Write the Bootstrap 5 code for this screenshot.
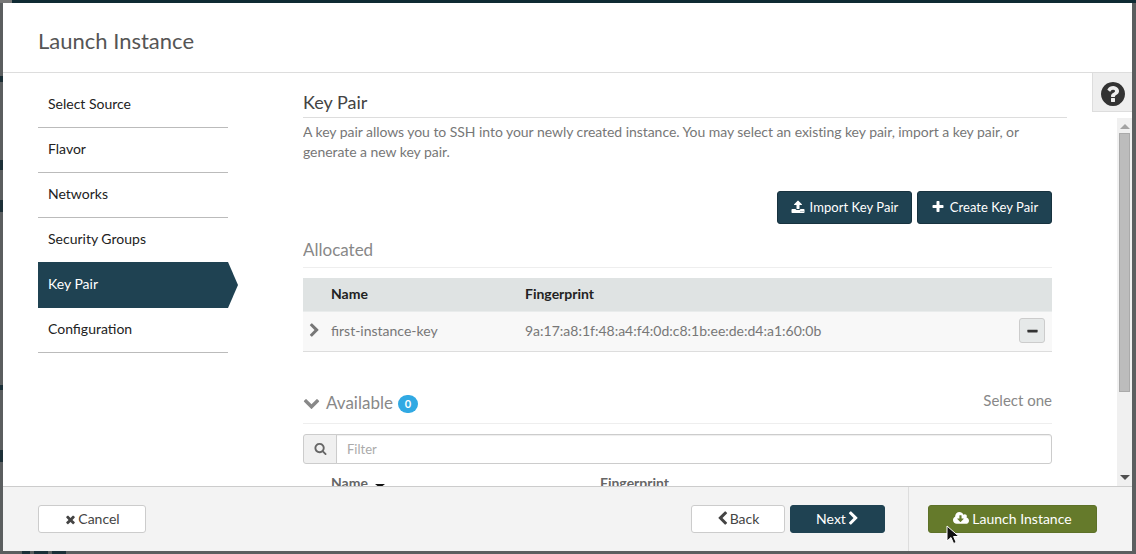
<!DOCTYPE html>
<html lang="en">
<head>
    <meta charset="UTF-8">
    <title>Launch Instance</title>
    <link href="https://cdn.jsdelivr.net/npm/bootstrap@5.3.0/dist/css/bootstrap.min.css" rel="stylesheet">
    <style>
        html, body { height: 554px; overflow: hidden; }
        body {
            font-family: Lato, "Liberation Sans", sans-serif;
            font-size: 14px;
            color: #333;
            background-color: #5b5e5f;
            background-image: linear-gradient(90deg, #777 0 12px, #0f2a33 12px),
                linear-gradient(180deg, transparent 76px, #1c2f36 76px 82px, transparent 82px 160px, #1c3038 160px 170px, transparent 170px 200px, #1c3038 200px 212px, transparent 212px 385px, #1c3038 385px 390px, transparent 390px 450px, #1c3038 450px 462px, transparent 462px),
                linear-gradient(90deg, transparent 22px, #1c3038 22px 30px, transparent 30px 34px, #1c3038 34px 48px, transparent 48px 52px, #1c3038 52px 66px, transparent 66px);
            background-size: 100% 3px, 3px 100%, 100% 3px;
            background-position: 0 0, 0 0, 0 100%;
            background-repeat: no-repeat;
        }
        .ico { fill: currentColor; display: inline-block; vertical-align: -2px; }
        .launch-frame {
            position: relative;
            margin: 3px 4px 3px 3px;
            height: 548px;
            background: #fff;
            display: flex;
            flex-direction: column;
        }
        .launch-head { height: 70px; border-bottom: 1px solid #ddd; padding: 0 35px; display: flex; align-items: center; }
        .launch-head h1 { font-size: 22px; font-weight: 400; color: #555; margin: 8px 0 0; }
        .launch-body { height: 413px; display: flex; overflow: hidden; }
        .step-list { width: 300px; flex: none; padding: 10px 0 0 35px; }
        .step-item {
            display: block; width: 190px; height: 45px; line-height: 42px;
            padding-left: 10px; border-bottom: 1px solid #bbb; color: #222; text-decoration: none;
        }
        .step-item.on {
            position: relative; background: #1f4252; color: #fff; border-bottom: 0; height: 46px; line-height: 44px; margin-top: -1px;
        }
        .step-item.on::after {
            content: ""; position: absolute; left: 100%; top: 0;
            border-left: 10px solid #1f4252; border-top: 23px solid transparent; border-bottom: 23px solid transparent;
        }
        .step-pane { flex: 1; min-width: 0; display: flex; flex-direction: column; }
        .pane-title { width: 764px; height: 45px; border-bottom: 1px solid #ddd; flex: none; }
        .pane-title h2 { font-size: 18px; font-weight: 400; color: #444; margin: 0; padding-top: 18px; line-height: 22px; }
        .pane-scroll { flex: 1; min-height: 0; display: flex; overflow: hidden; }
        .pane-inner { width: 749px; flex: none; overflow: hidden; }
        .pane-note { color: #777; line-height: 20px; margin: 4px 0 29px; letter-spacing: -.05px; }
        .pane-gap { flex: 1; }
        .fake-scroll { width: 15px; flex: none; background: #f0f0f0; position: relative; display: flex; flex-direction: column; align-items: center; }
        .scroll-up { width: 0; height: 0; margin-top: 6px; border: 5px solid transparent; border-top: 0; border-bottom: 5px solid #a3a3a3; }
        .scroll-thumb { width: 11px; height: 259px; margin-top: 4px; background: #bcbcbc; border: 1px solid #aaa; }
        .scroll-down { width: 0; height: 0; margin-top: auto; margin-bottom: 6px; border: 5px solid transparent; border-bottom: 0; border-top: 5px solid #505050; }
        .key-actions { display: flex; justify-content: flex-end; column-gap: 5px; }
        .btn-dark-blue { background: #1f4252; border: 1px solid #17323f; color: #fff; width: 135px; height: 33px; padding: 0; font-size: 13px; letter-spacing: .05px; border-radius: 3px; }
        .btn-dark-blue:hover { background: #1f4252; color: #fff; }
        .btn-dark-blue svg { margin-right: 5px; }
        .sub-title {
            font-size: 17px; font-weight: 400; color: #888; margin: 0; height: 44px; padding-top: 15px; line-height: 22px;
            border-bottom: 1px solid #eee;
        }
        .key-table { margin: 10px 0 0; width: 749px; table-layout: fixed; font-size: 14px; }
        .key-table > thead > tr > th { background: #dfe3e3; color: #222; font-weight: 700; height: 33px; padding: 0 0 2px; vertical-align: middle; border-bottom: 1px solid #e9ecec; }
        .key-table > tbody > tr > td { background: #f8f8f8; color: #777; height: 40px; padding: 0 0 2px; vertical-align: middle; border-bottom: 1px solid #ddd; }
        .key-table > tbody > tr > td.ps-1 { padding-left: 4px; }
        .btn-minus { width: 26px; height: 25px; padding: 0; background: #e6e9e9; border: 1px solid #ccc; border-radius: 3px; color: #333; line-height: 20px; }
        .avail-head {
            display: flex; align-items: center; height: 72px; padding-top: 31px; border-bottom: 1px solid #eee; color: #888;
        }
        .avail-head h3 { font-size: 17px; font-weight: 400; margin: 2px 0 0 6px; }
        .avail-count { background: #31a9e3; width: 20px; height: 18px; margin-left: 5px; margin-top: 3px; padding: 0; line-height: 18px; border-radius: 10px; font-size: 11px; font-weight: 700; }
        .select-hint { margin-left: auto; font-size: 15px; margin-bottom: 5px; }
        .filter-box { margin-top: 10px; height: 30px; }
        .filter-box .input-group-text { width: 34px; padding: 0; justify-content: center; background: #f0f0f0; border-color: #ccc; border-radius: 3px 0 0 3px; color: #666; }
        .filter-box .form-control { font-size: 13px; height: 30px; border-color: #ccc; border-radius: 0 3px 3px 0; padding: 0 10px; box-shadow: inset 0 1px 1px rgba(0,0,0,.07); }
        .filter-box .form-control::placeholder { color: #aaa; }
        .avail-cols { display: flex; padding: 9px 0 0 28px; font-weight: 700; color: #666; line-height: 20px; white-space: nowrap; }
        .avail-cols span:first-child { width: 269px; }
        .sort-caret { display: inline-block; margin-left: 7px; vertical-align: 0; border: 5px solid transparent; border-bottom: 0; border-top: 4px solid #111; }
        .launch-foot { height: 65px; border-top: 1px solid #ccc; background: #f3f3f3; display: flex; }
        .foot-left { width: 906px; flex: none; display: flex; align-items: center; padding: 0 23px 0 35px; border-right: 1px solid #ddd; }
        .foot-right { flex: 1; padding: 18px 0 0 19px; }
        .btn-plain { background: #fff; border: 1px solid #ccc; color: #444; height: 28px; padding: 0 0 2px; font-size: 14px; border-radius: 3px; }
        .btn-cancel { width: 108px; }
        .btn-cancel svg { margin-right: 1px; }
        .btn-back { width: 94px; margin-left: auto; margin-right: 5px; padding-right: 2px; }
        .btn-next { background: #1f4252; border: 1px solid #1f4252; color: #fff; height: 28px; padding: 0 0 2px 2px; width: 95px; font-size: 14px; border-radius: 3px; }
        .btn-launch { background: #657a2b; border: 1px solid #5d7128; color: #fff; height: 28px; padding: 0 0 2px; width: 169px; font-size: 14px; border-radius: 3px; }
        .btn-launch svg { margin-right: 3px; }
        .help-tab {
            position: absolute; right: 0; top: 69px; width: 40px; height: 40px; padding-top: 3px;
            background: #eee; border: 1px solid #ddd; border-right: 0; display: flex; align-items: center; justify-content: center; color: #333;
        }
        .mouse-arrow { position: absolute; left: 943px; top: 522px; }
    </style>
</head>
<body>
    <svg width="0" height="0" class="position-absolute">
        <symbol id="i-question" viewBox="0 0 1792 1792"><path d="M1024 1376v-192q0-14-9-23t-23-9h-192q-14 0-23 9t-9 23v192q0 14 9 23t23 9h192q14 0 23-9t9-23zm256-672q0-88-55.5-163t-138.5-116-170-41q-243 0-371 213-15 24 8 42l132 100q7 6 19 6 16 0 25-12 53-68 86-92 34-24 86-24 48 0 85.5 26t37.5 59q0 38-20 61t-68 45q-63 28-115.5 86.5t-52.5 125.5v36q0 14 9 23t23 9h192q14 0 23-9t9-23q0-19 21.5-49.5t54.5-49.5q32-18 49-28.5t46-35 44.5-48 28-60.5 12.5-81zm384 192q0 209-103 385.5t-279.5 279.5-385.5 103-385.5-103-279.5-279.5-103-385.5 103-385.5 279.5-279.5 385.5-103 385.5 103 279.5 279.5 103 385.5z"/></symbol>
        <symbol id="i-right" viewBox="0 0 1792 1792"><path d="M1363 877l-742 742q-19 19-45 19t-45-19l-166-166q-19-19-19-45t19-45l531-531-531-531q-19-19-19-45t19-45l166-166q19-19 45-19t45 19l742 742q19 19 19 45t-19 45z"/></symbol>
        <symbol id="i-left" viewBox="0 0 1792 1792"><path d="M1427 301l-531 531 531 531q19 19 19 45t-19 45l-166 166q-19 19-45 19t-45-19l-742-742q-19-19-19-45t19-45l742-742q19-19 45-19t45 19l166 166q19 19 19 45t-19 45z"/></symbol>
        <symbol id="i-down" viewBox="0 0 1792 1792"><path d="M1683 808l-742 741q-19 19-45 19t-45-19l-742-741q-19-19-19-45.5t19-45.5l166-165q19-19 45-19t45 19l531 531 531-531q19-19 45-19t45 19l166 165q19 19 19 45.5t-19 45.5z"/></symbol>
        <symbol id="i-plus" viewBox="0 0 1792 1792"><path d="M1600 736v192q0 40-28 68t-68 28h-416v416q0 40-28 68t-68 28h-192q-40 0-68-28t-28-68v-416h-416q-40 0-68-28t-28-68v-192q0-40 28-68t68-28h416v-416q0-40 28-68t68-28h192q40 0 68 28t28 68v416h416q40 0 68 28t28 68z"/></symbol>
        <symbol id="i-minus" viewBox="0 0 1792 1792"><path d="M1600 736v192q0 40-28 68t-68 28h-1216q-40 0-68-28t-28-68v-192q0-40 28-68t68-28h1216q40 0 68 28t28 68z"/></symbol>
        <symbol id="i-times" viewBox="0 0 1792 1792"><path d="M1490 1322q0 40-28 68l-136 136q-28 28-68 28t-68-28l-294-294-294 294q-28 28-68 28t-68-28l-136-136q-28-28-28-68t28-68l294-294-294-294q-28-28-28-68t28-68l136-136q28-28 68-28t68 28l294 294 294-294q28-28 68-28t68 28l136 136q28 28 28 68t-28 68l-294 294 294 294q28 28 28 68z"/></symbol>
        <symbol id="i-search" viewBox="0 0 1792 1792"><path d="M1216 832q0-185-131.5-316.5t-316.5-131.5-316.5 131.5-131.5 316.5 131.5 316.5 316.5 131.5 316.5-131.5 131.5-316.5zm512 832q0 52-38 90t-90 38q-54 0-90-38l-343-342q-179 124-399 124-143 0-273.5-55.5t-225-150-150-225-55.5-273.5 55.5-273.5 150-225 225-150 273.5-55.5 273.5 55.5 225 150 150 225 55.5 273.5q0 220-124 399l343 343q37 37 37 90z"/></symbol>
        <symbol id="i-upload" viewBox="0 0 1792 1792"><path d="M1344 1472q0-26-19-45t-45-19-45 19-19 45 19 45 45 19 45-19 19-45zm256 0q0-26-19-45t-45-19-45 19-19 45 19 45 45 19 45-19 19-45zm128-224v320q0 40-28 68t-68 28h-1472q-40 0-68-28t-28-68v-320q0-40 28-68t68-28h427q21 56 70.5 92t110.5 36h256q61 0 110.5-36t70.5-92h427q40 0 68 28t28 68zm-325-648q-17 40-59 40h-256v448q0 26-19 45t-45 19h-256q-26 0-45-19t-19-45v-448h-256q-42 0-59-40-17-39 14-69l448-448q18-19 45-19t45 19l448 448q31 30 14 69z"/></symbol>
        <symbol id="i-cloud" viewBox="0 0 1920 1792"><path d="M1280 928q0-14-9-23t-23-9h-224v-352q0-13-9.5-22.5t-22.5-9.5h-192q-13 0-22.5 9.5t-9.5 22.5v352h-224q-13 0-22.5 9.5t-9.5 22.5q0 14 9 23l352 352q9 9 23 9t23-9l351-352q10-12 10-24zm640 224q0 159-112.5 271.5t-271.5 112.5h-1088q-185 0-316.5-131.5t-131.5-316.5q0-130 70-240t188-165q-2-30-2-43 0-212 150-362t362-150q156 0 285.5 87t188.5 231q71-62 166-62 106 0 181 75t75 181q0 76-41 138 130 31 213.5 135.5t83.5 238.5z"/></symbol>
    </svg>

    <div class="launch-frame">
        <div class="launch-head"><h1>Launch Instance</h1></div>

        <div class="launch-body">
            <nav class="step-list">
                <a class="step-item" href="#">Select Source</a>
                <a class="step-item" href="#">Flavor</a>
                <a class="step-item" href="#">Networks</a>
                <a class="step-item" href="#">Security Groups</a>
                <a class="step-item on" href="#">Key Pair</a>
                <a class="step-item" href="#">Configuration</a>
            </nav>

            <div class="step-pane">
                <div class="pane-title"><h2>Key Pair</h2></div>
                <div class="pane-scroll">
                    <div class="pane-inner">
                        <p class="pane-note">A key pair allows you to SSH into your newly created instance. You may select an existing key pair, import a key pair, or generate a new key pair.</p>
                        <div class="key-actions">
                            <button class="btn btn-dark-blue" type="button"><svg class="ico" width="14" height="14"><use href="#i-upload"/></svg>Import Key Pair</button>
                            <button class="btn btn-dark-blue" type="button"><svg class="ico" width="14" height="14"><use href="#i-plus"/></svg>Create Key Pair</button>
                        </div>

                        <h3 class="sub-title">Allocated</h3>
                        <table class="table key-table">
                            <thead>
                                <tr><th style="width: 28px"></th><th style="width: 194px">Name</th><th>Fingerprint</th><th style="width: 33px"></th></tr>
                            </thead>
                            <tbody>
                                <tr>
                                    <td class="ps-1"><svg class="ico" width="15" height="15"><use href="#i-right"/></svg></td>
                                    <td>first-instance-key</td>
                                    <td>9a:17:a8:1f:48:a4:f4:0d:c8:1b:ee:de:d4:a1:60:0b</td>
                                    <td><button class="btn btn-minus" type="button"><svg class="ico" width="13" height="13"><use href="#i-minus"/></svg></button></td>
                                </tr>
                            </tbody>
                        </table>

                        <div class="avail-head">
                            <svg class="ico" width="17" height="17"><use href="#i-down"/></svg>
                            <h3>Available</h3>
                            <span class="badge avail-count">0</span>
                            <span class="select-hint">Select one</span>
                        </div>
                        <div class="input-group filter-box">
                            <span class="input-group-text"><svg class="ico" width="13" height="13"><use href="#i-search"/></svg></span>
                            <input class="form-control" type="text" placeholder="Filter">
                        </div>
                        <div class="avail-cols"><span>Name<i class="sort-caret"></i></span><span>Fingerprint</span></div>
                    </div>
                    <div class="pane-gap"></div>
                    <div class="fake-scroll">
                        <div class="scroll-up"></div>
                        <div class="scroll-thumb"></div>
                        <div class="scroll-down"></div>
                    </div>
                </div>
            </div>
        </div>

        <div class="launch-foot">
            <div class="foot-left">
                <button class="btn btn-plain btn-cancel" type="button"><svg class="ico" width="13" height="13"><use href="#i-times"/></svg>Cancel</button>
                <button class="btn btn-plain btn-back" type="button"><svg class="ico" width="15" height="15"><use href="#i-left"/></svg>Back</button>
                <button class="btn btn-next" type="button">Next<svg class="ico" width="15" height="15"><use href="#i-right"/></svg></button>
            </div>
            <div class="foot-right">
                <button class="btn btn-launch" type="button"><svg class="ico" width="16" height="15"><use href="#i-cloud"/></svg>Launch Instance</button>
            </div>
        </div>

        <div class="help-tab"><svg class="ico" width="28" height="28"><use href="#i-question"/></svg></div>
        <svg class="mouse-arrow" width="14" height="20" viewBox="0 0 14 20"><path d="M1 1v15l4-3.5 2.6 6 2.6-1.1-2.6-5.9H13z" fill="#111" stroke="#fff" stroke-width="1"/></svg>
    </div>
    <script src="https://cdn.jsdelivr.net/npm/bootstrap@5.3.0/dist/js/bootstrap.bundle.min.js"></script>
</body>
</html>
